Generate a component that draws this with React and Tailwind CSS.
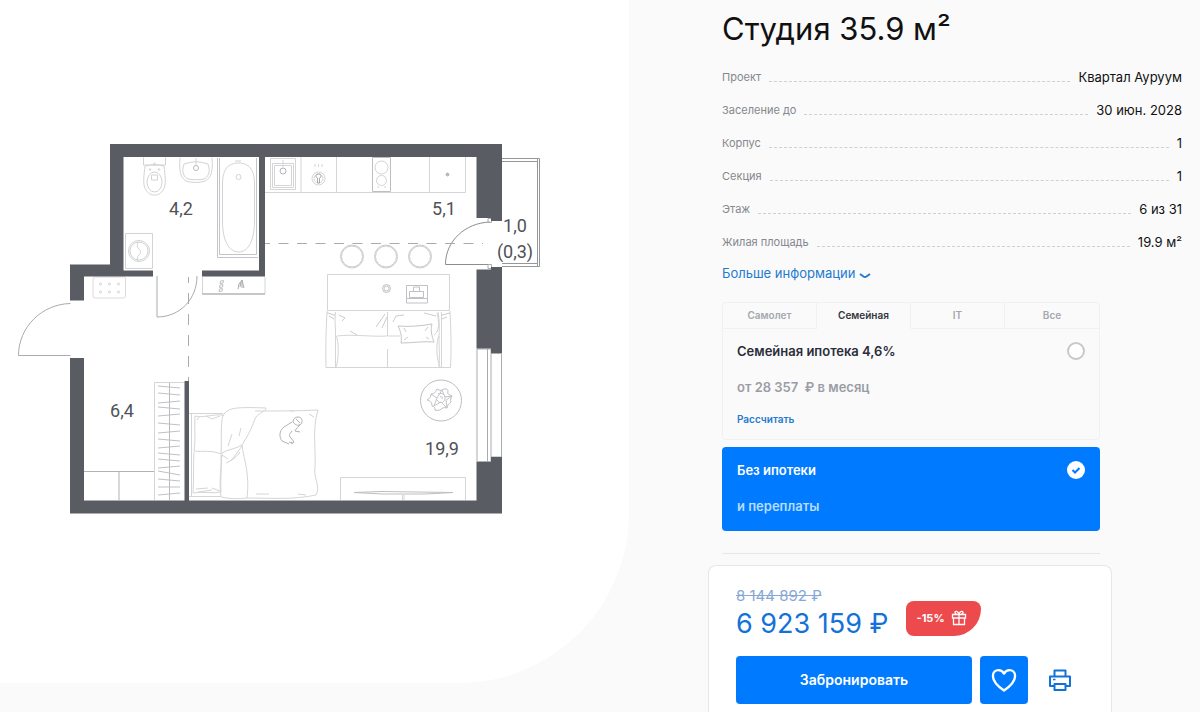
import React, { useState } from 'react';

const specs = [
  { label: 'Проект', value: 'Квартал Ауруум' },
  { label: 'Заселение до', value: '30 июн. 2028' },
  { label: 'Корпус', value: '1' },
  { label: 'Секция', value: '1' },
  { label: 'Этаж', value: '6 из 31' },
  { label: 'Жилая площадь', value: '19.9 м²' },
];

const tabs = ['Самолет', 'Семейная', 'IT', 'Все'];

// y positions of the hangers in the wardrobe, with the tilt of each one
const hangers = [
  [387, 1], [394, 1], [402, -1], [408, 1], [415, -1], [424, 1], [432, -1],
  [440, 1], [447, -1], [454, 1], [460, 1], [467, -1], [473, 2], [480, 1], [487, 0], [494, -1],
];

function Walls() {
  return (
    <g fill="#5a5c64">
      <path d="M110 144H502V221H491V218H476.500V157H265V276.500H202V270.500H259V157H123.500V270.500H153V276.500H84V300.500H70V264.500H110Z" />
      <path d="M70 358H84V500.500H184.500V381H189V500.500H476.500V461.500H491V457H502V513.500H70Z" />
      <path d="M476.500 269.500H491V267H502V353H491V348.500H476.500Z" />
    </g>
  );
}

function Openings() {
  return (
    <g fill="none" stroke="#a9abaf" strokeWidth="1">
      {/* doors */}
      <path d="M70.500 303.500C42 304 18.500 327 18.500 355.500H70.500" />
      <path d="M157 276V317C180 317 197 299 197 276" />
      <path d="M490 222C465 223 445.500 241 445.500 264.500H488" stroke="#8b8d92" />
      <path d="M488 218.500h3.500v4H488zM488 264.500h3.500v4H488z" />
      {/* balcony */}
      <path d="M502 158.500H539.500V266.500H502M502 161.500H537.500V263.500H502M537.500 158.500v3M537.500 263.500v3" stroke="#95979b" />
      {/* window */}
      <path d="M477 349V461M487.500 349V461M491 349V461M477 349H491M491 353.500H501.500V457H491" />
      {/* zone borders */}
      <path d="M265 243.500H483" strokeDasharray="10 8.500" strokeDashoffset="5" />
      <path d="M188.500 277V381" strokeDasharray="11 10" strokeDashoffset="5" />
    </g>
  );
}

function Bathroom() {
  return (
    <g fill="none" stroke="#d2d3d5" strokeWidth="1">
      {/* toilet */}
      <path d="M143.500 157.500v7.500h22v-7.500M145 166c-1 9-2 16-.5 21 2 5 5 8 10 8s8-3 10-8c1.500-5 .5-12-.5-21M145 166c5-1.500 14-1.500 19 0" />
      <ellipse cx="154.500" cy="182" rx="7.500" ry="10" />
      <path d="M151.500 175h6v5h-6z" />
      <circle cx="150" cy="169.500" r=".8" />
      <circle cx="159" cy="169.500" r=".8" />
      <circle cx="154.500" cy="164" r="1" />
      {/* basin */}
      <path d="M180 157.500c-1 12 0 20 6 23.500 6 2 13 2 19 0 7-3.500 8-11.500 7-23.500" />
      <path d="M184 164c10-3 14-3 24 0 3 8 0 13-4 15-5 1-11 1-16 0-4-2-7-7-4-15z" />
      <circle cx="196" cy="168" r="2.500" stroke="#b8babd" />
      <path d="M196 158v7" />
      {/* bath */}
      <path d="M217.500 158V257.500H258M219.500 158V254.500H256.500V158" stroke="#c4c5c8" />
      <path d="M222.500 184c0-15 6-21 16-21s16 6 16 21v37c0 19-6 31-16 31s-16-12-16-31z" />
      <circle cx="238.500" cy="177" r="2.500" />
      <path d="M235 161h6" />
      {/* washing machine */}
      <path d="M125.500 233.500h27v35h-27z" />
      <circle cx="139" cy="251" r="10.500" />
      <circle cx="139" cy="251" r="9" />
      <path d="M138 242c-1 4-1 5 1 7s2 4 0 6-2 4-1 6" />
    </g>
  );
}

function Kitchen() {
  return (
    <g fill="none" stroke="#d4d5d7" strokeWidth="1">
      <path d="M265 192.500H465.500V157M301 157V192.500M336.500 157V192.500M429.500 157V192.500" />
      <path d="M270.500 158.500h25v31h-25zM272.500 163.500h21v24h-21zM274.500 165.500h17v20h-17z" />
      <circle cx="283" cy="171" r="3" stroke="#b0b2b5" />
      <path d="M283 160v7" />
      {/* coffee maker */}
      <circle cx="318.500" cy="178.500" r="6.500" />
      <circle cx="318.500" cy="178.500" r="4.500" />
      <path d="M315 167v-3M318.500 167v-3M322 167v-3" />
      <path d="M318.500 174a2 2 0 0 1 1 4v5h-2v-5a2 2 0 0 1 1-4z" stroke="#a9abaf" />
      {/* hob */}
      <path d="M372.500 157.500h18v34h-18z" stroke="#bcbec1" />
      <circle cx="381.500" cy="167.500" r="6.500" />
      <circle cx="381.500" cy="180.500" r="5" />
      <path d="M378 188v-2M385 188v-2" />
      <path d="M445.500 174.500h4M447.500 172.500v4M446 173l3 3M449 173l-3 3" stroke="#b8babd" />
      {/* bar stools */}
      {[352, 386, 420].map((cx) => (
        <g key={cx} stroke="#ccccd0">
          <circle cx={cx} cy="256.500" r="11.500" />
          <circle cx={cx} cy="256.500" r="10.500" />
        </g>
      ))}
      <path d="M327.500 274.500h122v36h-122z" />
      <circle cx="386.500" cy="288.500" r="4" stroke="#c0c1c4" />
      <circle cx="386.500" cy="288.500" r="2.500" stroke="#c0c1c4" />
      <path d="M406.500 285.500h21v13h-21zM406.500 298.500v4.500h21v-4.500M409.500 297.500v-6h14v6zM413.500 291v-4h6v4" stroke="#c0c1c4" />
    </g>
  );
}

function Hall() {
  return (
    <g fill="none" stroke="#d4d5d7" strokeWidth="1">
      {/* mat */}
      <rect x="93" y="277" width="32.500" height="21" rx="2" stroke="#e2d8da" />
      {[100.500, 109.500, 118.500].map((cx) => (
        <g key={cx}>
          <circle cx={cx} cy="284" r="1" />
          <circle cx={cx} cy="292" r="1" />
        </g>
      ))}
      {/* shelf */}
      <path d="M202.500 277V294H265V277" />
      <path d="M202 294H265" stroke="#a3a5a9" />
      <path d="M220.500 281l3-.5-.5 2.500-3 .5zM220 285l3-.5-.5 2.500-3 .5zM219.500 289l3-.5-.5 2.500-3 .5z" stroke="#c0c1c4" />
      <path d="M238 289l1-5 3-4v8M240 287l1-5M244 288l-2-8" stroke="#a9abaf" />
      {/* cupboards */}
      <path d="M84 471.500H154.500M119 471.500V500" stroke="#b0b2b5" />
      <path d="M154.500 500V382.500H184" />
      <path d="M169.500 383V500" stroke="#b8babd" />
      {hangers.map(([y, tilt]) => (
        <path key={y} d={`M158 ${y - tilt}L180 ${y + tilt}`} stroke="#c0c1c4" />
      ))}
    </g>
  );
}

function LivingRoom() {
  return (
    <g fill="none" stroke="#d4d5d7" strokeWidth="1">
      {/* sofa */}
      <path d="M327 311C326 330 325.500 350 326 367.500H450.500C451.500 350 451 330 450 311" />
      <path d="M335.500 312C334 320 336 328 335.500 336V367M336 336c3 4 3 24 0 31M438 312c2 10 1 18 1 27 0 10 1 19 0 28M439 336c-3 5-3 22 1 31M441.500 312v55" />
      <path d="M387.500 312v24M387.500 349v18M337 336c17-2 34 1 50 0M388 336h12M434 335c6-4 5-14 3-22" />
      <path d="M398 326c11 1 22 0 34-2-2 6 0 12 2 18-11-1-22 1-33 1 1-6 0-11-3-17z" stroke="#c4c5c8" />
      <path d="M327 313c3 0 5 2 8 2M329 316l5 3M339 315l6 3-3 3M350 331l7 4M376 327l9-13M382 328l5-11M404 328l2 4M428 327l-3 4M404 340l4-3M429 339l-3-2M393 322l3-6 8-1M450 313l-8 2M447 317l-5 2M424 313l12 3" stroke="#cbccce" />
      {/* plant */}
      <circle cx="441" cy="400.500" r="20.500" stroke="#bcbec1" />
      <path d="M427 400c3-2 4-3 4-6 3 0 4-1 6-5 2 1 4 2 5 1 3-2 6-1 6 1-1 3 1 4 4 5-1 2-2 4-1 6-2 2-4 3-4 6-3-1-5 0-7 2-2 0-4 1-5 0 0-2-1-4-3-4 0-3-1-5-5-6z" stroke="#bcbec1" />
      <path d="M431 394l6 4 5-8M437 398l-3 8 7-4 6 6-1-8 6-4-7 1-3-7M438 394c4-2 8 1 7 5s-6 5-8 1M440 397c2-1 3 0 2 2" stroke="#c4c5c8" />
      {/* TV stand */}
      <path d="M340.500 500V477.500h125V500" />
      <path d="M354 492.500l27-1 72 1-28 1.500h-42z" stroke="#bcbec1" />
      <path d="M402.500 495v5M404 495v5" />
      {/* bed */}
      <path d="M189 413.500h34M189 496.500h32M191.500 414v82" />
      <path d="M195 416c9 2 18-2 28-1-3 12-1 26-2 39-9-4-18-2-27-3 2-12 0-24 1-35zM194 452c-1 13 0 27-1 41 9-2 19 1 28-1-1-12 1-24 0-37" />
      <path d="M206 416l6 3 8-3M197 420l2-3M196 489l12-1M212 488l8 3M198 492l14-2" />
      <path d="M223 416c4-9 15-9 43-8 0 4-9 5-11 11-4 11-8 18-13 26-6 4-14 4-20 8M242 445c2 16 8 28 5 53M222 453c-1 15-3 30-1 44 8 2 17 2 26 1 23 0 46 2 69-3 5-9-3-17-1-28 1-20-3-37 3-57-20 1-42 1-63 1" />
      <path d="M232 434l-4 12M241 428l-2 8M240 452c-3 5-9 9-14 11M228 459l-6-4M242 446l-11 15M309 414l5 3M256 494h13M298 494l8 1M290 411h4" />
      {/* cat */}
      <path d="M292 422c-3 2-5 3-8 5-5 4-5 10-2 14l7 3M292 431c-2 3-4 4-1 7l3 4-3 2M293 422c0-3 2-5 5-5 4 0 5 4 3 7-2 2-5 2-8-2zM296 419l4 4M300 424c-1 3-4 4-5 7l5 1M289 442l4 1" stroke="#b0b2b5" />
    </g>
  );
}

function FloorPlan() {
  return (
    <svg viewBox="0 0 629 683" className="block w-full" role="img" aria-label="Планировка">
      <Bathroom />
      <Kitchen />
      <Hall />
      <LivingRoom />
      <Openings />
      <Walls />
      <g className="font-['Liberation_Sans_Narrow',Roboto,sans-serif]" fill="#505258" fontSize="18" textAnchor="middle">
        <text x="181" y="215">4,2</text>
        <text x="444" y="215">5,1</text>
        <text x="515" y="232">1,0</text>
        <text x="515" y="258">(0,3)</text>
        <text x="122" y="417">6,4</text>
        <text x="442" y="455">19,9</text>
      </g>
    </svg>
  );
}

function GiftIcon() {
  return (
    <svg viewBox="0 0 16 16" className="size-4" fill="none" stroke="currentColor" strokeWidth="1.300" aria-hidden="true">
      <path d="M1.500 4.500h13v3.500h-13zM2.500 8v6.500h11V8M8 4.500v10M8 4.500C6 4.500 4 4 4 2.500S7 .5 8 4.500C9 .5 12 1 12 2.500s-2 2-4 2" />
    </svg>
  );
}

function PrinterIcon() {
  return (
    <svg viewBox="0 0 24 24" className="size-6" fill="none" stroke="currentColor" strokeWidth="2" strokeLinejoin="round" aria-hidden="true">
      <path d="M6.500 8V2.500h11V8M6.500 18H2V8.500h20V18h-4.500M6.500 16h11v6h-11z" />
      <path d="M5 11.500h2.500" strokeWidth="1.500" />
    </svg>
  );
}

function App() {
  const [tab, setTab] = useState('Семейная');
  const [plan, setPlan] = useState('none');

  return (
    <div className="grid min-h-screen grid-cols-[629fr_571fr] items-start overflow-hidden bg-[#fafafa] font-[Inter,sans-serif] text-[#111]">
      <div className="overflow-hidden rounded-br-[170px] bg-white">
        <FloorPlan />
      </div>

      <main className="pt-2 pr-[18px] pl-[93px]">
        <h1 className="text-[31px] leading-[42px]">Студия 35.9 м²</h1>

        <dl className="mt-[11px]">
          {specs.map((item) => (
            <div key={item.label} className="flex h-[33px] items-center gap-2">
              <dt className="text-[11px] text-[#85888e]">{item.label}</dt>
              <span className="mt-2 flex-1 border-b border-dashed border-[#cfd0d2]" />
              <dd className="text-[13px]">{item.value}</dd>
            </div>
          ))}
        </dl>
        <button type="button" className="flex h-[30px] items-center gap-1 text-[13px] text-[#2479d0]">
          Больше информации
          <svg viewBox="0 0 12 12" className="mt-1 size-3" fill="none" stroke="currentColor" strokeWidth="2" aria-hidden="true">
            <path d="M1 4l3.500 2.500q1.500 1 3 0L11 4" />
          </svg>
        </button>

        <div className="mt-[13px] max-w-[378px]">
          {/* Mortgage options */}
          <section className="rounded border border-[#f1f1f3]">
            <div className="grid grid-cols-4">
              {tabs.map((name) => (
                <button
                  key={name}
                  type="button"
                  onClick={() => setTab(name)}
                  className={`h-[26px] border-r border-b border-r-[#f1f1f3] text-[10px] font-semibold last:border-r-0 ${tab === name ? 'border-b-transparent text-[#33363f]' : 'border-b-[#f1f1f3] text-[#a5a8ae]'}`}
                >
                  {name}
                </button>
              ))}
            </div>
            <div className="px-[14px] pt-3 pb-3">
              <label className="flex items-center justify-between">
                <span className="text-[13px] leading-5 font-semibold text-[#2b2e3a]">Семейная ипотека 4,6%</span>
                <input
                  type="radio"
                  name="plan"
                  checked={plan === 'family'}
                  onChange={() => setPlan('family')}
                  className="size-[18px] appearance-none rounded-full border-2 border-[#c6c8cd] bg-white checked:border-[#007aff]"
                />
              </label>
              <p className="mt-4 text-[13px] leading-5 font-semibold text-[#9a9da6]">от 28 357 &nbsp;₽ в месяц</p>
              <a href="#calc" className="mt-[14px] block text-[10px] leading-4 font-semibold text-[#2479d0]">Рассчитать</a>
            </div>
          </section>

          <label className="mt-[7px] block rounded bg-[#007aff] px-[15px] pt-[13px] pb-[15px] text-[13px] leading-5 font-semibold text-white">
            <span className="flex items-center justify-between">
              Без ипотеки
              <span className="relative flex">
                <input
                  type="radio"
                  name="plan"
                  checked={plan === 'none'}
                  onChange={() => setPlan('none')}
                  className="peer size-[18px] appearance-none rounded-full bg-white"
                />
                <svg viewBox="0 0 18 18" className="absolute inset-0 hidden size-[18px] text-[#007aff] peer-checked:block" fill="none" stroke="currentColor" strokeWidth="2" aria-hidden="true">
                  <path d="M5.500 9l2.500 2.500 4.500-4.500" />
                </svg>
              </span>
            </span>
            <span className="mt-4 block text-[#b5ddff]">и переплаты</span>
          </label>

          <hr className="mt-[22px] border-[#e6e7e9]" />
        </div>

        {/* Price card */}
        <section className="-ml-[14px] mt-[11px] max-w-[404px] rounded-t-lg border border-b-0 border-[#e6e7e9] bg-white px-[27px] pt-5 pb-[9px]">
          <div className="flex items-center gap-[18px]">
            <div>
              <p className="text-[15px] leading-5 text-[#85a8d4] line-through">8 144 892 ₽</p>
              <p className="text-[27px] leading-9 text-[#1272d8]">6 923 159 ₽</p>
            </div>
            <span className="mt-2 flex h-[35px] items-center gap-[6px] rounded-lg rounded-br-[28px] bg-[#ec4a4d] pr-[14px] pl-[10px] text-[11px] font-bold text-white">
              -15%
              <GiftIcon />
            </span>
          </div>
          <div className="mt-[14px] flex items-center gap-2">
            <button type="button" className="h-12 flex-1 rounded bg-[#007aff] text-sm font-semibold text-white">
              Забронировать
            </button>
            <button type="button" aria-label="В избранное" className="flex size-12 items-center justify-center rounded bg-[#007aff] text-white">
              <svg viewBox="0 0 24 24" className="size-7" fill="none" stroke="currentColor" strokeWidth="2" strokeLinejoin="round" aria-hidden="true">
                <path d="M12 21C7 17.500 2.500 13.500 2.500 8.500 2.500 5.500 4.700 3.500 7.300 3.500c2 0 3.700 1.100 4.700 3 1-1.900 2.700-3 4.700-3 2.600 0 4.800 2 4.800 5 0 5-4.500 9-9.500 12.500z" />
              </svg>
            </button>
            <button type="button" aria-label="Распечатать" className="flex size-12 items-center justify-center text-[#1272d8]">
              <PrinterIcon />
            </button>
          </div>
        </section>
      </main>
    </div>
  );
}

export default App;
